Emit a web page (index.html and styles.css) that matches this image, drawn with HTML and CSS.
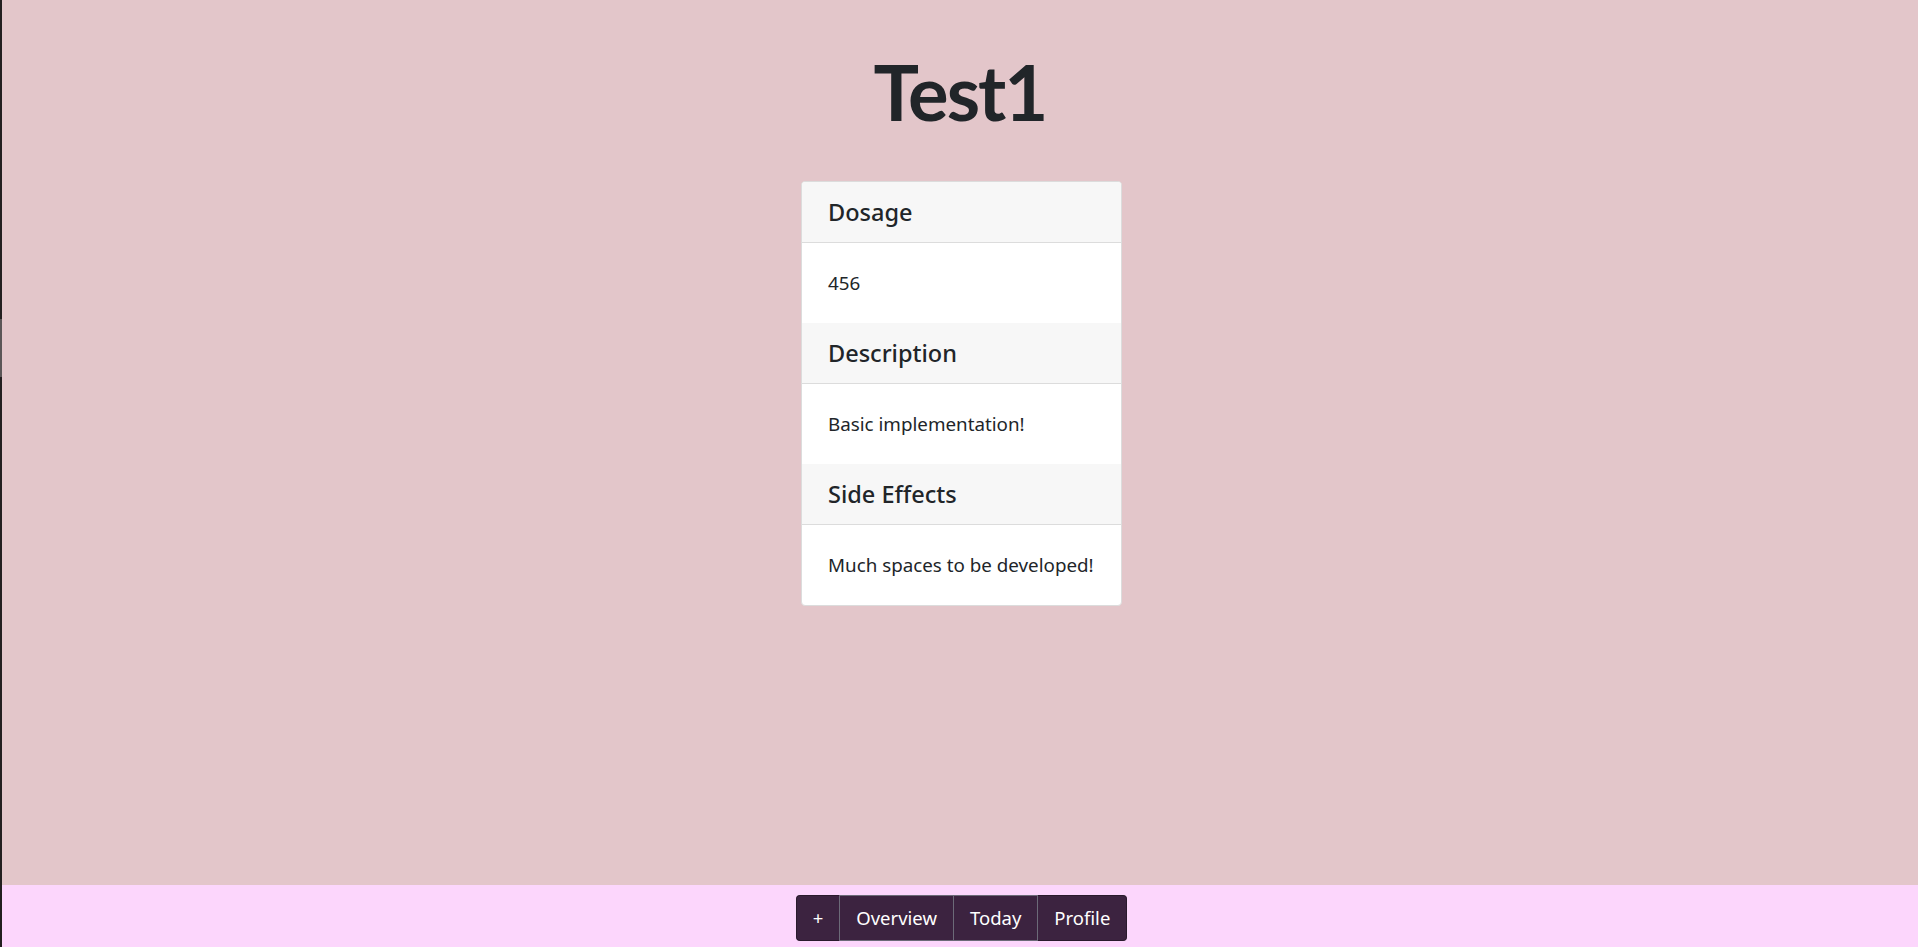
FILE: index.html
```html
<!DOCTYPE html>
<html lang="en">
<head>
<meta charset="utf-8">
<title>Test1</title>
<link rel="stylesheet" href="styles.css">
</head>
<body>
<div class="edge"><div class="edge-mark"></div></div>
<div class="app">
  <main class="content">
    <h1 class="title">Test1</h1>
    <section class="card">
      <div class="card-header"><h4>Dosage</h4></div>
      <div class="card-body"><p>456</p></div>
      <div class="card-header"><h4>Description</h4></div>
      <div class="card-body"><p>Basic implementation!</p></div>
      <div class="card-header"><h4>Side Effects</h4></div>
      <div class="card-body"><p>Much spaces to be developed!</p></div>
    </section>
  </main>
  <footer class="footer">
    <nav class="btn-group">
      <button class="btn">+</button>
      <button class="btn">Overview</button>
      <button class="btn">Today</button>
      <button class="btn">Profile</button>
    </nav>
  </footer>
</div>
</body>
</html>
```

FILE: styles.css
```css
* { box-sizing: border-box; }
html, body { margin: 0; padding: 0; height: 100%; }
body {
  display: flex;
  height: 947px;
  overflow: hidden;
  font-family: "Segoe UI", "Noto Sans", sans-serif;
  color: #212529;
}
.edge {
  width: 2px;
  background: #231f20;
  flex: none;
}
.edge-mark {
  margin-top: 319px;
  height: 58px;
  background: #5b5657;
}
.app {
  flex: 1;
  display: flex;
  flex-direction: column;
}
.content {
  flex: 1;
  background: #e3c6ca;
  display: flex;
  flex-direction: column;
  align-items: center;
}
.title {
  margin: 44px 0 0;
  font-family: Lato, sans-serif;
  font-weight: bold;
  font-size: 76px;
  line-height: 96px;
  letter-spacing: -2px;
  color: #212529;
}
.card {
  margin-top: 41px;
  width: 321px;
  background: #fff;
  border: 1px solid #dcdcdc;
  border-radius: 4px;
  overflow: hidden;
  margin-left: 3px;
}
.card-header {
  height: 61px;
  background: #f7f7f7;
  border-bottom: 1px solid #dcdcdc;
  display: flex;
  align-items: center;
  padding: 0 26px;
}
.card-header h4 {
  margin: 0;
  font-size: 23.5px;
  font-weight: 500;
  line-height: 1.2;
}
.card-body {
  height: 80px;
  display: flex;
  align-items: center;
  padding: 0 20px 0 26px;
}
.card-body p {
  margin: 0;
  font-size: 18.8px;
  line-height: 26px;
  white-space: nowrap;
}
.footer {
  height: 62px;
  background: #fcd6fc;
  display: flex;
  justify-content: center;
  padding-top: 10px;
}
.btn-group {
  display: flex;
  height: 46px;
  margin-left: 3px;
}
.btn {
  font-family: "Segoe UI", "Noto Sans", sans-serif;
  font-size: 18.5px;
  line-height: 28px;
  color: #fff;
  background: #3c2340;
  border: 1px solid #6c6a78;
  border-left-width: 0;
  padding: 0 16px;
  margin: 0;
}
.btn:first-child {
  border-left-width: 1px;
  border-radius: 4px 0 0 4px;
  border-color: #2a1a2d;
  border-right-color: #6c6a78;
}
.btn:last-child {
  border-radius: 0 4px 4px 0;
  border-color: #2a1a2d;
}
```
